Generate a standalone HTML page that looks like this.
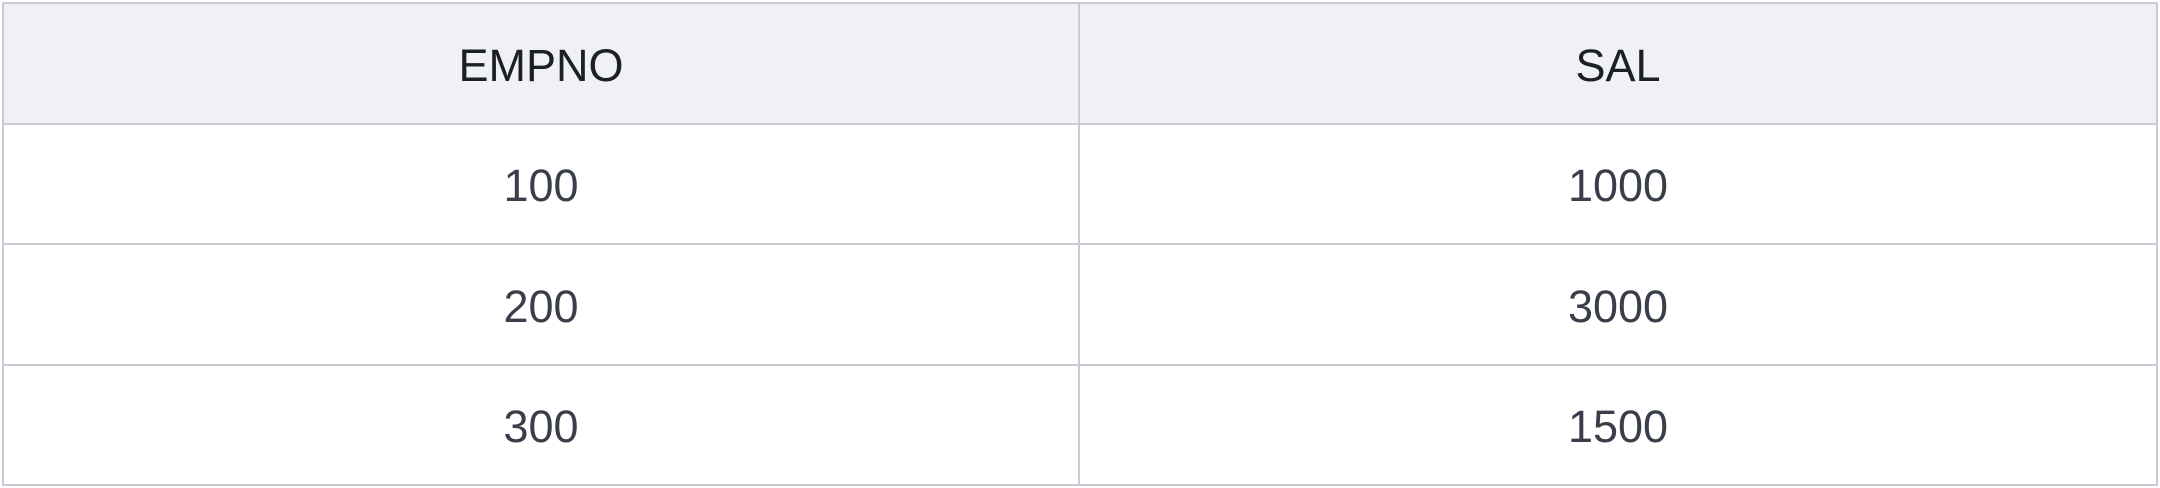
<!DOCTYPE html>
<html><head><style>
html,body{margin:0;padding:0;background:#fff;width:2160px;height:488px;overflow:hidden}
table{position:absolute;left:2px;top:2px;width:2156px;height:484px;border-collapse:collapse;font-family:"Liberation Sans",sans-serif;font-size:45px;table-layout:fixed}
td,th{border:2px solid #c9ccd5;text-align:center;vertical-align:middle;padding:5px 0 0 0;font-weight:normal}
th{background:#f0f1f5;color:#1c1f26;height:112px}
td{color:#3a3e4a;height:112px}
col.a{width:1076px}
</style></head><body>
<table><colgroup><col class="a"><col></colgroup>
<tr><th>EMPNO</th><th>SAL</th></tr>
<tr><td>100</td><td>1000</td></tr>
<tr><td>200</td><td>3000</td></tr>
<tr><td>300</td><td>1500</td></tr>
</table>
</body></html>
